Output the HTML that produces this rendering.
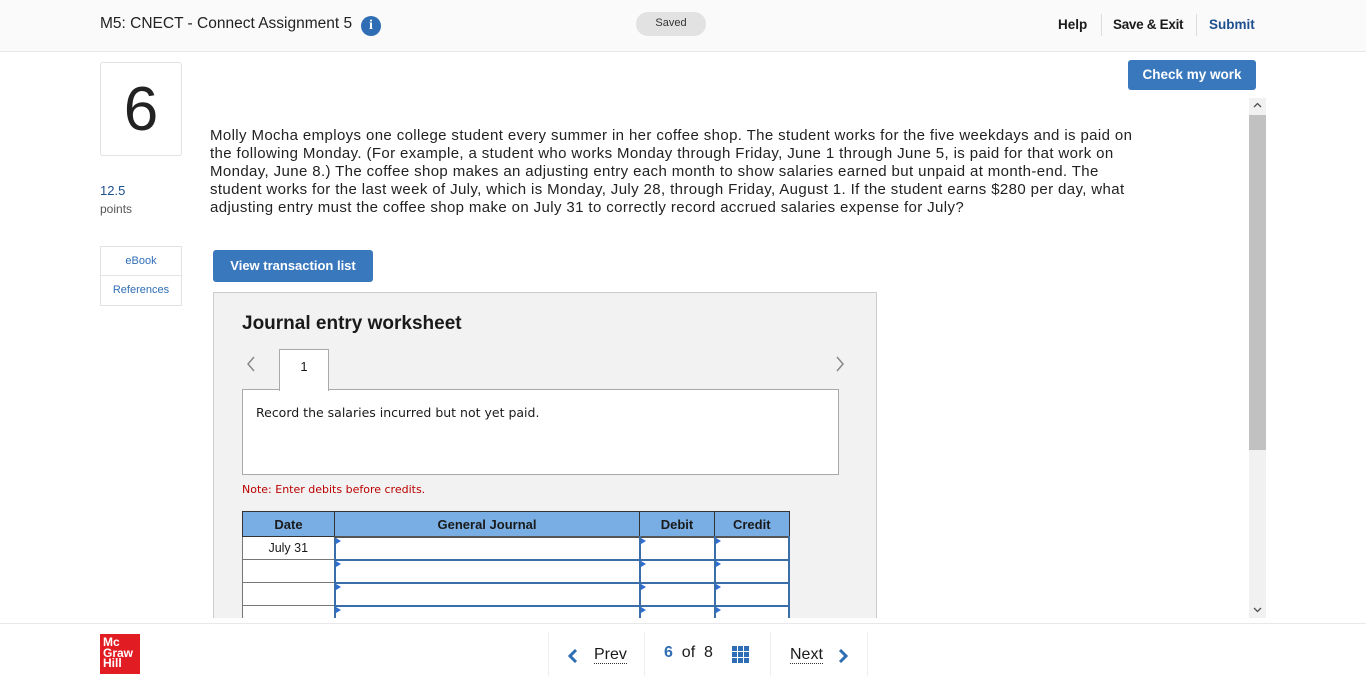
<!DOCTYPE html>
<html><head><meta charset="utf-8"><style>
*{box-sizing:border-box;margin:0;padding:0}
body{width:1366px;height:681px;overflow:hidden;background:#fff;font-family:"Liberation Sans",Arial,sans-serif;color:#1a1a1a;position:relative}
.abs{position:absolute}
#hdr{left:0;top:0;width:1366px;height:52px;background:#fafafa;border-bottom:1px solid #e8e8e8}
#main{left:0;top:52px;width:1366px;height:566px;overflow:hidden}
#ftr{left:0;top:623px;width:1366px;height:58px;border-top:1px solid #e8e8e8}
.btn{background:#3a78be;color:#fff;font-weight:bold;font-size:13px;border-radius:3px;text-align:center}
table{border-collapse:collapse;font-size:13px;font-family:"Liberation Sans",Arial,sans-serif}
th{background:#78aee3;border:1px solid #333;height:25px;font-weight:bold;color:#1a1a1a;vertical-align:middle;padding-top:1px}
td{border:1px solid #777;height:23px;background:#fff;position:relative}
td.in{border:2px solid #3a6ea8;border-top:2px solid #555}
td.in:before{content:"";position:absolute;left:0;top:0;border-left:5px solid #2e6ed1;border-top:3px solid transparent;border-bottom:3px solid transparent}
</style></head><body>
<div id="hdr" class="abs">
 <div class="abs" style="left:100px;top:15px;font-size:15.5px;color:#222">M5: CNECT - Connect Assignment 5</div>
 <div class="abs" style="left:361px;top:16px;width:20px;height:20px;border-radius:50%;background:#2f6eb5;color:#fff;font:bold 14px 'Liberation Serif',serif;text-align:center;line-height:20px">i</div>
 <div class="abs" style="left:636px;top:12px;width:70px;height:24px;border-radius:12px;background:#e2e2e2;font-size:11px;color:#333;text-align:center;line-height:22px">Saved</div>
 <div class="abs" style="left:1058px;top:17px;font-size:13.5px;font-weight:bold">Help</div>
 <div class="abs" style="left:1101px;top:14px;height:22px;border-left:1px solid #ddd"></div>
 <div class="abs" style="left:1113px;top:17px;font-size:13.5px;font-weight:bold;letter-spacing:-0.3px">Save &amp; Exit</div>
 <div class="abs" style="left:1196px;top:14px;height:22px;border-left:1px solid #ddd"></div>
 <div class="abs" style="left:1209px;top:17px;font-size:13.5px;font-weight:bold;color:#1e4f8f">Submit</div>
</div>
<div id="main" class="abs">
 <div class="abs btn" style="left:1128px;top:8px;width:128px;height:30px;line-height:30px;font-size:13.5px">Check my work</div>
 <div class="abs" style="left:100px;top:10px;width:82px;height:94px;border:1px solid #e2e2e2;border-radius:3px;font-size:62px;text-align:center;line-height:94px;color:#222">6</div>
 <div class="abs" style="left:100px;top:131px;font-size:13px;color:#1e4f8f">12.5</div>
 <div class="abs" style="left:100px;top:150px;font-size:12px;color:#555">points</div>
 <div class="abs" style="left:100px;top:194px;width:82px;height:60px;border:1px solid #e2e2e2;font-size:11px;color:#2f6eb5;text-align:center">
  <div style="height:29px;line-height:29px;border-bottom:1px solid #e2e2e2">eBook</div>
  <div style="line-height:29px">References</div>
 </div>
 <div class="abs" style="left:210px;top:75px;width:1000px;font-size:15px;line-height:18px;color:#222;letter-spacing:0.38px;white-space:nowrap">Molly Mocha employs one college student every summer in her coffee shop. The student works for the five weekdays and is paid on<br>the following Monday. (For example, a student who works Monday through Friday, June 1 through June 5, is paid for that work on<br>Monday, June 8.) The coffee shop makes an adjusting entry each month to show salaries earned but unpaid at month-end. The<br>student works for the last week of July, which is Monday, July 28, through Friday, August 1. If the student earns $280 per day, what<br>adjusting entry must the coffee shop make on July 31 to correctly record accrued salaries expense for July?</div>
 <div class="abs btn" style="left:213px;top:198px;width:160px;height:32px;line-height:32px">View transaction list</div>
 <div class="abs" style="left:213px;top:240px;width:664px;height:400px;background:#f2f2f2;border:1px solid #ccc">
  <div class="abs" style="left:28px;top:20px;font-size:19px;font-weight:bold">Journal entry worksheet</div>
  <svg class="abs" style="left:32px;top:63px" width="10" height="16"><path d="M8 1L2 8l6 7" fill="none" stroke="#888" stroke-width="1.5"/></svg>
  <svg class="abs" style="left:621px;top:63px" width="10" height="16"><path d="M2 1l6 7-6 7" fill="none" stroke="#888" stroke-width="1.5"/></svg>
  <div class="abs" style="left:65px;top:56px;width:50px;height:42px;background:#fff;border:1px solid #aaa;border-bottom:none;font-size:13px;text-align:center;line-height:34px;z-index:2">1</div>
  <div class="abs" style="left:28px;top:96px;width:597px;height:86px;background:#fff;border:1px solid #aaa;font-family:'DejaVu Sans',sans-serif;font-size:12.5px;padding:15px 13px">Record the salaries incurred but not yet paid.</div>
  <div class="abs" style="left:28px;top:190px;font-family:'DejaVu Sans',sans-serif;font-size:11px;color:#b00">Note: Enter debits before credits.</div>
  <table class="abs" style="left:28px;top:218px;width:548px">
   <tr><th style="width:92px">Date</th><th style="width:305px">General Journal</th><th style="width:75px">Debit</th><th>Credit</th></tr>
   <tr><td style="text-align:center;font-size:12.5px">July 31</td><td class="in"></td><td class="in"></td><td class="in"></td></tr>
   <tr><td></td><td class="in"></td><td class="in"></td><td class="in"></td></tr>
   <tr><td></td><td class="in"></td><td class="in"></td><td class="in"></td></tr>
   <tr><td></td><td class="in"></td><td class="in"></td><td class="in"></td></tr>
  </table>
 </div>
 <div class="abs" style="left:1249px;top:46px;width:17px;height:520px;background:#f1f1f1">
  <div class="abs" style="left:0;top:17px;width:17px;height:335px;background:#c1c1c1"></div>
  <svg class="abs" style="left:4px;top:4px" width="9" height="7"><path d="M1 5l3.5-3.5L8 5" fill="none" stroke="#505050" stroke-width="1.3"/></svg>
  <svg class="abs" style="left:4px;top:508px" width="9" height="7"><path d="M1 2l3.5 3.5L8 2" fill="none" stroke="#505050" stroke-width="1.3"/></svg>
 </div>
</div>
<div id="ftr" class="abs">
 <div class="abs" style="left:100px;top:10px;width:40px;height:40px;background:#e21c23;color:#fff;font-weight:bold;font-size:12px;line-height:10.5px;padding:3px 0 0 3px">Mc<br>Graw<br>Hill</div>
 <div class="abs" style="left:548px;top:8px;height:44px;border-left:1px solid #eee"></div>
 <div class="abs" style="left:644px;top:8px;height:44px;border-left:1px solid #eee"></div>
 <div class="abs" style="left:770px;top:8px;height:44px;border-left:1px solid #eee"></div>
 <div class="abs" style="left:867px;top:8px;height:44px;border-left:1px solid #eee"></div>
 <svg class="abs" style="left:568px;top:25px" width="10" height="14"><path d="M8 1L2 7l6 6" fill="none" stroke="#2f6eb5" stroke-width="3"/></svg>
 <div class="abs" style="left:594px;top:22px;font-size:16px;border-bottom:1px dotted #333;line-height:17px">Prev</div>
 <div class="abs" style="left:664px;top:20px;font-size:16px"><b style="color:#2f6eb5">6</b>&nbsp; of &nbsp;8</div>
 <svg class="abs" style="left:732px;top:22px" width="18" height="18"><g fill="#2f6eb5"><rect x="0" y="0" width="5" height="5"/><rect x="6" y="0" width="5" height="5"/><rect x="12" y="0" width="5" height="5"/><rect x="0" y="6" width="5" height="5"/><rect x="6" y="6" width="5" height="5"/><rect x="12" y="6" width="5" height="5"/><rect x="0" y="12" width="5" height="5"/><rect x="6" y="12" width="5" height="5"/><rect x="12" y="12" width="5" height="5"/></g></svg>
 <div class="abs" style="left:790px;top:22px;font-size:16px;border-bottom:1px dotted #333;line-height:17px">Next</div>
 <svg class="abs" style="left:838px;top:25px" width="10" height="14"><path d="M2 1l6 6-6 6" fill="none" stroke="#2f6eb5" stroke-width="3"/></svg>
</div>
</body></html>
